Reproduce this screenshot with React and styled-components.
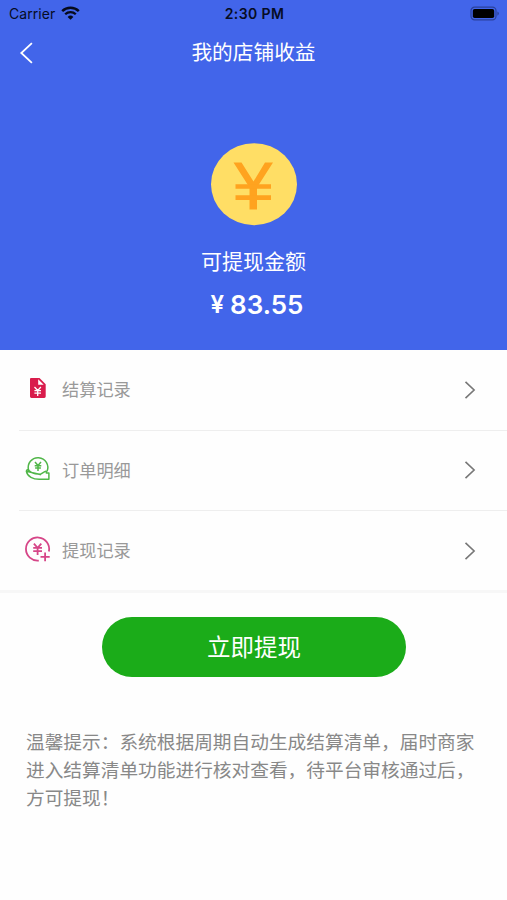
import React from "react";
import styled, { createGlobalStyle } from "styled-components";

const GlobalStyle = createGlobalStyle`
  * {
    box-sizing: border-box;
  }

  body {
    margin: 0;
    background-color: #ffffff;
    font-family: "Inter", "Noto Sans CJK SC", sans-serif;
  }
`;

const Screen = styled.div`
  width: 100%;
  max-width: 507px;
  height: 900px;
  overflow: hidden;
  background-color: #fefefe;
`;

const Hero = styled.header`
  height: 350px;
  background-color: #4265ea;
  color: #ffffff;
`;

const StatusBar = styled.div`
  display: grid;
  grid-template-columns: 1fr auto 1fr;
  align-items: center;
  height: 27px;
  padding: 0 7px 0 9px;
  color: #060c24;
  font-size: 14px;
`;

const Carrier = styled.div`
  display: flex;
  align-items: center;
  gap: 6px;
  letter-spacing: 0.05px;

  svg {
    margin-top: -2px;
  }
`;

const Clock = styled.div`
  font-weight: 600;
  font-size: 14px;
  letter-spacing: 0.4px;
`;

const Battery = styled.div`
  display: flex;
  justify-content: flex-end;
`;

const NavBar = styled.div`
  display: grid;
  grid-template-columns: 60px 1fr 60px;
  align-items: center;
  height: 50px;
`;

const BackButton = styled.button`
  display: flex;
  padding: 2px 0 0 19px;
  border: none;
  background: none;
  color: #ffffff;
`;

const Title = styled.h1`
  margin: 2px 0 0;
  text-align: center;
  font-size: 20.7px;
  line-height: 30px;
  font-weight: 400;
`;

const Balance = styled.div`
  display: flex;
  flex-direction: column;
  align-items: center;
  padding-top: 66px;
`;

const BalanceLabel = styled.div`
  margin-top: 21px;
  font-size: 21px;
  line-height: 30px;
`;

const Amount = styled.div`
  display: flex;
  gap: 6px;
  margin: 11px 0 0 7px;
  font-size: 26px;
  line-height: 34px;
  font-weight: 600;
`;

const Currency = styled.span`
  font-size: 24px;
`;

const Menu = styled.nav`
  border-bottom: 3px solid #f7f7f7;
`;

const MenuRow = styled.div`
  display: flex;
  align-items: center;
  height: ${(props) => (props.$last ? "79px" : "80.5px")};
  margin-left: 19px;
  padding: 0 31px 0 5px;
  border-bottom: ${(props) => (props.$last ? "none" : "1px solid #eeeeee")};
`;

const MenuIcon = styled.span`
  display: flex;
  width: 28px;
  height: 28px;
  margin-top: -4px;
`;

const MenuLabel = styled.span`
  flex: 1;
  margin: 1px 0 0 10px;
  color: #999999;
  font-size: 17.2px;
  line-height: 26px;
`;

const WithdrawButton = styled.button`
  display: block;
  width: 304px;
  height: 60px;
  margin: 24px auto 0 102px;
  padding: 1px 0 0;
  border: none;
  border-radius: 30px;
  background-color: #1bac19;
  color: #ffffff;
  font-family: inherit;
  font-size: 23.5px;
  line-height: 59px;
`;

const Tips = styled.p`
  margin: 52px 26px 0;
  color: #888888;
  font-size: 18.7px;
  line-height: 28px;
`;

const WifiIcon = () => (
  <svg width="19" height="14" viewBox="0 0 19 14" fill="none">
    <path d="M1.2 5.1a12 12 0 0 1 16.6 0" stroke="#060a1c" strokeWidth="2.5" />
    <path d="M4.2 8.2a7.6 7.6 0 0 1 10.6 0" stroke="#060a1c" strokeWidth="2.3" />
    <path d="M9.5 13.8 6.6 11a4.2 4.2 0 0 1 5.8 0z" fill="#060a1c" />
  </svg>
);

const BatteryIcon = () => (
  <svg width="30" height="15" viewBox="0 0 30 15">
    <rect x="1" y="1.2" width="25" height="12.6" rx="3.6" fill="none" stroke="#2a419b" strokeWidth="1.2" />
    <rect x="2.8" y="3" width="21.4" height="9" rx="1.8" fill="#000000" />
    <path d="M27.4 5.4v4.4a2.4 2.4 0 0 0 0-4.4z" fill="#2a419b" />
  </svg>
);

const BackIcon = () => (
  <svg width="14" height="22" viewBox="0 0 14 22" fill="none">
    <path d="M12.9 1.2 2.3 11l10.6 9.8" stroke="currentColor" strokeWidth="1.8" />
  </svg>
);

const CoinIcon = () => (
  <svg width="86" height="83" viewBox="0 0 86 83" fill="none">
    <ellipse cx="43" cy="41.2" rx="43" ry="41" fill="#ffde65" />
    <g fill="#ffa31f">
      <path d="M22.5 19.5h8L42.5 38.5 54 19.5h8L46 44.5V66.5h-7.5V44.5z" />
      <path d="M24.5 41.3h35.5v4.5H24.5zM24.5 52.3h35.5v4.6H24.5z" />
    </g>
  </svg>
);

const ChevronIcon = () => (
  <svg width="12" height="18" viewBox="0 0 12 18" fill="none">
    <path d="m1.5.9 8.6 8.1-8.6 8.1" stroke="#777777" strokeWidth="1.6" />
  </svg>
);

const BillIcon = () => (
  <svg width="28" height="28" viewBox="0 0 28 28">
    <path d="M7 4h8.5l6.2 6.3V22.6a1.4 1.4 0 0 1-1.4 1.4H7.4A1.4 1.4 0 0 1 6 22.6V5a1 1 0 0 1 1-1z" fill="#d91c4c" />
    <path d="M14.2 5.3v5.4h5.5z" fill="#ffffff" />
    <path d="m10.5 13 3.2 3.5 3.2-3.5M10.4 16.7h6.6M10.4 19.2h6.6M13.7 16.5v5.6" stroke="#ffffff" strokeWidth="1.3" fill="none" />
  </svg>
);

const OrderIcon = () => (
  <svg width="28" height="28" viewBox="0 0 28 28" fill="none" stroke="#50b648" strokeWidth="1.5" strokeLinejoin="round">
    <path d="M4.6 16.2A9.8 9.8 0 1 1 23 17.4" />
    <path d="M2.4 17.3c0-1.9 1.6-1.8 2.8-.6 2.2 2.2 5.6 3.3 9.2 3.2 1.6 0 2.2.5 1.9 1.2M16.2 20.4l4.6-2.8c1.5-.7 2 .2 1.4 1.3h2.7v6.4h-9C9 25.5 3.4 22.6 2.4 17.3z" />
    <path d="m11 8.1 3 3.5 3-3.5M10.7 11.7h6.6M11.1 14.1h5.8M14 11.6v5.3" strokeWidth="1.5" />
  </svg>
);

const WithdrawIcon = () => (
  <svg width="28" height="28" viewBox="0 0 28 28" fill="none" stroke="#d64688" strokeWidth="1.8">
    <path d="M14.8 25.6A11.6 11.6 0 1 1 24.9 16.5" />
    <path d="m9.9 8.6 3.7 4.2 3.7-4.2M9.2 12.9h8.8M9.2 16.1h8.8M13.6 12.7v7.4" strokeWidth="1.8" />
    <path d="M16.5 21.9h9.2M21.1 17.5v8.8" strokeWidth="1.8" />
  </svg>
);

const menuItems = [
  { label: "结算记录", Icon: BillIcon },
  { label: "订单明细", Icon: OrderIcon },
  { label: "提现记录", Icon: WithdrawIcon },
];

const App = () => {
  return (
    <Screen lang="zh-CN">
      <GlobalStyle />
      <Hero>
        <StatusBar>
          <Carrier>
            Carrier
            <WifiIcon />
          </Carrier>
          <Clock>2:30 PM</Clock>
          <Battery>
            <BatteryIcon />
          </Battery>
        </StatusBar>
        <NavBar>
          <BackButton aria-label="返回">
            <BackIcon />
          </BackButton>
          <Title>我的店铺收益</Title>
        </NavBar>
        <Balance>
          <CoinIcon />
          <BalanceLabel>可提现金额</BalanceLabel>
          <Amount>
            <Currency>¥</Currency>
            <span>83.55</span>
          </Amount>
        </Balance>
      </Hero>
      <Menu>
        {menuItems.map(({ label, Icon }, index) => (
          <MenuRow key={label} $last={index === menuItems.length - 1}>
            <MenuIcon>
              <Icon />
            </MenuIcon>
            <MenuLabel>{label}</MenuLabel>
            <ChevronIcon />
          </MenuRow>
        ))}
      </Menu>
      <WithdrawButton>立即提现</WithdrawButton>
      <Tips>
        温馨提示：系统根据周期自动生成结算清单，届时商家进入结算清单功能进行核对查看，待平台审核通过后，方可提现！
      </Tips>
    </Screen>
  );
};

export default App;
